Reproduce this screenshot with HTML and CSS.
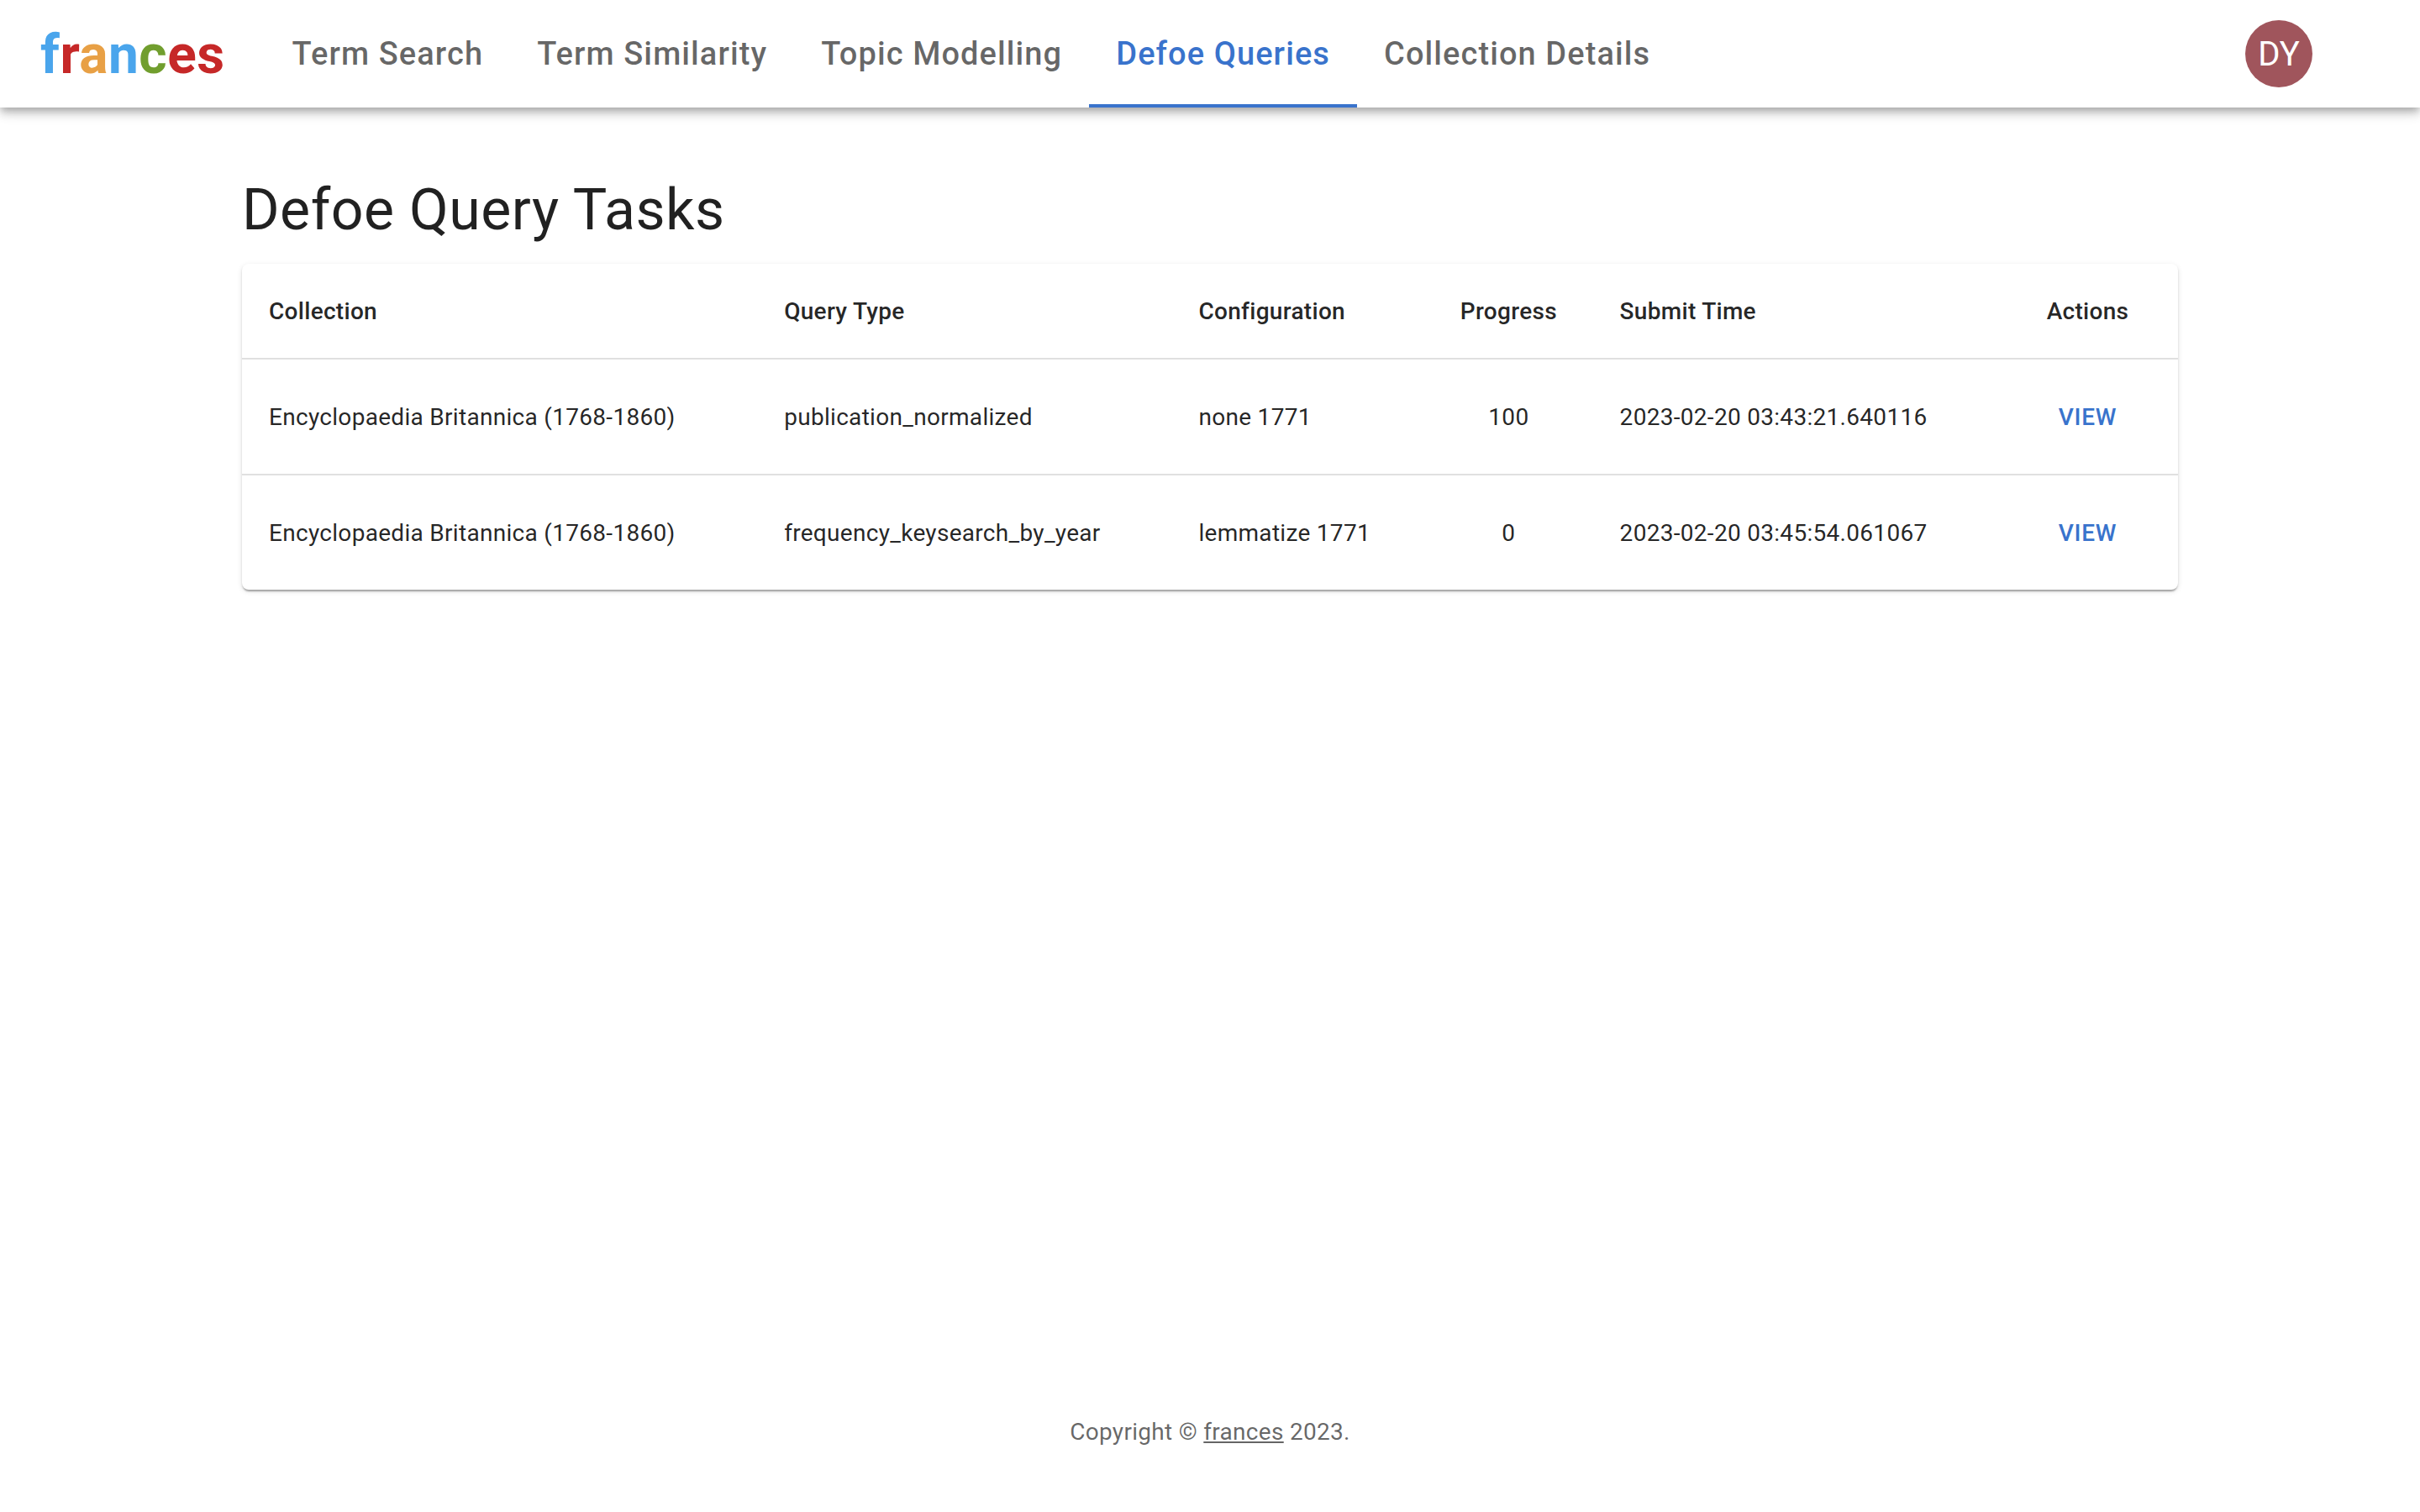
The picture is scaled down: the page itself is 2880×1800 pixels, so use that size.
FILE: index.html
```html
<!DOCTYPE html>
<html lang="en">
<head>
  <meta charset="utf-8">
  <meta name="viewport" content="width=device-width, initial-scale=1">
  <title>frances - Defoe Queries</title>
  <link rel="stylesheet" href="styles.css">
</head>
<body>
  <header class="app-bar">
    <a class="logo" href="#"><span class="blue">f</span><span class="red">r</span><span class="orange">a</span><span class="blue">n</span><span class="green">c</span><span class="red">es</span></a>
    <nav class="tabs" aria-label="Main">
      <a class="tab" href="#">Term Search</a>
      <a class="tab" href="#">Term Similarity</a>
      <a class="tab" href="#">Topic Modelling</a>
      <a class="tab active" href="#" aria-current="page">Defoe Queries</a>
      <a class="tab" href="#">Collection Details</a>
    </nav>
    <button class="avatar" type="button" title="Account">DY</button>
  </header>

  <main class="content">
    <h1 class="title">Defoe Query Tasks</h1>
    <div class="card">
      <table class="tasks">
        <thead>
          <tr>
            <th scope="col">Collection</th>
            <th scope="col">Query Type</th>
            <th scope="col">Configuration</th>
            <th scope="col" class="center">Progress</th>
            <th scope="col">Submit Time</th>
            <th scope="col" class="center">Actions</th>
          </tr>
        </thead>
        <tbody>
          <tr>
            <td>Encyclopaedia Britannica (1768-1860)</td>
            <td>publication_normalized</td>
            <td>none 1771</td>
            <td class="center">100</td>
            <td>2023-02-20 03:43:21.640116</td>
            <td class="center"><button class="view" type="button">VIEW</button></td>
          </tr>
          <tr>
            <td>Encyclopaedia Britannica (1768-1860)</td>
            <td>frequency_keysearch_by_year</td>
            <td>lemmatize 1771</td>
            <td class="center">0</td>
            <td>2023-02-20 03:45:54.061067</td>
            <td class="center"><button class="view" type="button">VIEW</button></td>
          </tr>
        </tbody>
      </table>
    </div>
  </main>

  <footer class="footer">Copyright © <a href="#">frances</a> 2023.</footer>
</body>
</html>
```
FILE: styles.css
```css
* {
  box-sizing: border-box;
}

body {
  display: flex;
  flex-direction: column;
  min-height: 100vh;
  margin: 0;
  background: #fff;
  color: rgba(0, 0, 0, 0.87);
  font-family: Roboto, "Liberation Sans", sans-serif;
  font-size: 28px;
  line-height: 48px;
  letter-spacing: 0.01071em;
}

button {
  border: 0;
  font-family: inherit;
  cursor: pointer;
}

.app-bar {
  display: flex;
  align-items: center;
  padding: 0 128px 0 48px;
  background: #fff;
  box-shadow: 0 4px 8px -2px rgba(0, 0, 0, 0.2),
    0 8px 10px 0 rgba(0, 0, 0, 0.14),
    0 2px 20px 0 rgba(0, 0, 0, 0.12);
}

.logo {
  margin-right: 48px;
  padding-top: 4px;
  font-size: 64px;
  font-weight: 700;
  line-height: 80px;
  letter-spacing: 0.00735em;
  text-decoration: none;
}

.blue { color: #4aa5ec; }
.red { color: #c62828; }
.orange { color: #e8a045; }
.green { color: #719e2e; }

.tabs {
  display: flex;
  flex: 1;
}

.tab {
  padding: 42px 32px 38px;
  border-bottom: 4px solid transparent;
  color: rgba(0, 0, 0, 0.6);
  font-size: 38px;
  font-weight: 500;
  line-height: 44px;
  letter-spacing: 0.02857em;
  text-decoration: none;
  white-space: nowrap;
}

.tab.active {
  border-color: #3973cc;
  color: #3973cc;
}

.avatar {
  width: 80px;
  height: 80px;
  padding: 2px 0 0;
  border-radius: 50%;
  background: #a0555c;
  color: #fff;
  font-size: 40px;
  line-height: 40px;
}

.content {
  flex: 1;
  width: 80%;
  margin: 0 auto;
  padding-top: 80px;
}

.title {
  margin: 0 0 22px;
  font-size: 68px;
  font-weight: 400;
  line-height: 84px;
  letter-spacing: 0.00735em;
}

.card {
  border-radius: 8px;
  background: #fff;
  box-shadow: 0 4px 2px -2px rgba(0, 0, 0, 0.2),
    0 2px 2px 0 rgba(0, 0, 0, 0.14),
    0 2px 6px 0 rgba(0, 0, 0, 0.12);
}

.tasks {
  width: 100%;
  border-collapse: separate;
  border-spacing: 0;
}

th,
td {
  padding: 33px 32px 31px;
  border-bottom: 2px solid #e0e0e0;
  text-align: left;
}

th {
  font-weight: 500;
}

tbody tr:last-child td {
  border-bottom: 0;
}

.tasks .center {
  text-align: center;
}

.view {
  display: block;
  min-width: 128px;
  margin: 0 auto;
  padding: 12px 16px;
  border-radius: 8px;
  background: transparent;
  color: #3973cc;
  font-size: 28px;
  font-weight: 500;
  line-height: 48px;
  letter-spacing: 0.02857em;
}

.footer {
  padding: 48px 48px 75px;
  color: rgba(0, 0, 0, 0.6);
  line-height: 40px;
  text-align: center;
}

.footer a {
  color: inherit;
}
```
